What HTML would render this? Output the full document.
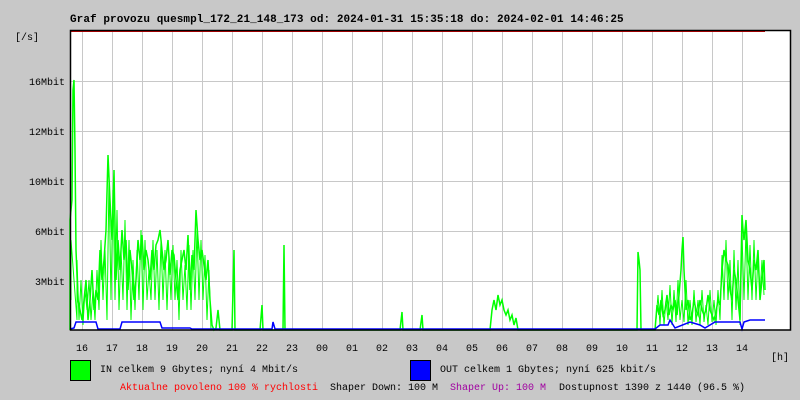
<!DOCTYPE html>
<html><head><meta charset="utf-8"><style>
html,body{margin:0;padding:0;background:#c8c8c8;}
body{width:800px;height:400px;overflow:hidden;position:relative;}
svg{position:absolute;left:0;top:0;}
text{font-family:"Liberation Mono","DejaVu Sans Mono",monospace;font-size:10px;fill:#000;}
.t{font-size:11px;font-weight:bold;letter-spacing:0.07px;}
</style></head><body>
<svg width="800" height="400" viewBox="0 0 800 400">
<rect x="70" y="30" width="720" height="300" fill="#fff"/>
<g stroke="#c8c8c8" stroke-width="1">
<line x1="70" y1="81.5" x2="790" y2="81.5"/><line x1="70" y1="131.5" x2="790" y2="131.5"/><line x1="70" y1="181.5" x2="790" y2="181.5"/><line x1="70" y1="231.5" x2="790" y2="231.5"/><line x1="70" y1="281.5" x2="790" y2="281.5"/>
<line x1="82.5" y1="30" x2="82.5" y2="330"/><line x1="112.5" y1="30" x2="112.5" y2="330"/><line x1="142.5" y1="30" x2="142.5" y2="330"/><line x1="172.5" y1="30" x2="172.5" y2="330"/><line x1="202.5" y1="30" x2="202.5" y2="330"/><line x1="232.5" y1="30" x2="232.5" y2="330"/><line x1="262.5" y1="30" x2="262.5" y2="330"/><line x1="292.5" y1="30" x2="292.5" y2="330"/><line x1="322.5" y1="30" x2="322.5" y2="330"/><line x1="352.5" y1="30" x2="352.5" y2="330"/><line x1="382.5" y1="30" x2="382.5" y2="330"/><line x1="412.5" y1="30" x2="412.5" y2="330"/><line x1="442.5" y1="30" x2="442.5" y2="330"/><line x1="472.5" y1="30" x2="472.5" y2="330"/><line x1="502.5" y1="30" x2="502.5" y2="330"/><line x1="532.5" y1="30" x2="532.5" y2="330"/><line x1="562.5" y1="30" x2="562.5" y2="330"/><line x1="592.5" y1="30" x2="592.5" y2="330"/><line x1="622.5" y1="30" x2="622.5" y2="330"/><line x1="652.5" y1="30" x2="652.5" y2="330"/><line x1="682.5" y1="30" x2="682.5" y2="330"/><line x1="712.5" y1="30" x2="712.5" y2="330"/><line x1="742.5" y1="30" x2="742.5" y2="330"/>
</g>
<polyline fill="none" stroke="#00ff00" stroke-width="1.5" points="70,330 70,220 72,200 73,90 74,80 75,150 76,250 78,300 80,310 82,320 84,300 86,280 88,320 90,300 92,270 94,310 96,290 98,300 100,250 102,280 104,260 106,230 108,155 110,200 112,240 114,170 116,280 118,240 120,270 122,230 124,260 126,240 128,290 130,250 132,270 134,300 136,280 138,240 140,260 142,235 144,270 146,250 148,260 150,280 152,250 154,270 156,245 158,240 160,230 162,250 164,270 166,260 168,240 170,275 172,250 174,255 176,280 178,300 180,270 182,260 184,250 186,270 188,235 190,290 192,255 194,270 196,210 198,240 200,260 202,250 204,265 206,280 208,260 210,300 212,325 214,330 216,328 218,310 220,330 232,330 234,250 235,330 260,330 262,305 263,330 283,330 284,245 285,330 400,330 402,312 403,330 420,330 422,315 423,330 490,330 492,310 494,300 496,310 498,295 500,305 502,300 504,310 506,315 508,310 510,320 512,315 514,325 516,318 518,330 637,330 638,252 639,260 640,270 641,330 655,330 657,305 659,315 661,300 663,315 665,310 667,295 669,315 671,305 673,310 675,300 677,315 679,295 681,270 682,250 683,237 684,270 686,310 688,300 690,320 692,315 694,300 696,310 698,315 700,300 702,310 704,315 706,310 708,295 710,310 712,315 714,320 716,312 718,300 720,305 722,270 724,250 726,260 728,265 730,290 732,300 734,270 736,280 738,300 740,320 742,215 743,230 744,240 746,220 748,260 750,270 752,290 754,260 756,270 758,250 760,300 762,280 764,260 765,290"/>
<polyline fill="none" stroke="#00ff00" stroke-width="1" points="71,300 71,240 77,320 77,260 79,320 81,280 83,325 85,290 87,310 89,280 91,320 93,290 95,320 97,270 99,310 101,240 103,300 105,250 107,320 109,180 111,300 113,190 115,300 117,210 119,310 121,250 123,300 125,220 127,310 129,240 131,320 133,260 135,310 137,250 139,300 141,230 143,310 145,240 147,300 149,270 151,300 153,240 155,300 157,250 159,310 161,240 163,300 165,250 167,310 169,255 171,300 173,245 175,300 177,260 179,320 181,250 183,300 185,265 187,310 189,245 191,310 193,250 195,300 197,230 199,300 201,240 203,300 205,255 207,320 209,270 211,330"/>
<polyline fill="none" stroke="#00ff00" stroke-width="1" points="656,320 658,295 660,325 662,290 664,325 666,300 668,320 670,285 672,325 674,290 676,322 678,280 680,320 682,300 684,322 686,280 688,325 690,300 692,325 694,290 696,322 698,300 700,325 702,290 704,322 706,305 708,325 710,290 712,322 714,300 716,325 718,290 720,320 722,255 724,300 726,240 728,300 730,260 732,320 734,250 736,310 738,260 740,325 742,235 744,300 746,230 748,300 750,245 752,300 754,240 756,300 758,255 760,295 762,260 764,295"/>
<polyline fill="none" stroke="#0000ff" stroke-width="1.5" points="70,329 74,328 76,322 96,322 98,329 120,329 122,322 160,322 162,328 190,328 192,329 272,329 273,322 275,329 655,329 660,325 668,325 670,320 675,328 690,322 700,325 705,328 715,322 740,322 742,329 744,322 750,320 765,320"/>
<line x1="70" y1="31.5" x2="765" y2="31.5" stroke="#d00000" stroke-width="1"/>
<rect x="70.5" y="30.5" width="720" height="299.5" fill="none" stroke="#000" stroke-width="1.5"/>
<text class="t" x="70" y="22">Graf provozu quesmpl_172_21_148_173 od: 2024-01-31 15:35:18 do: 2024-02-01 14:46:25</text>
<text x="15" y="40">[/s]</text>
<g text-anchor="end"><text x="65" y="85">16Mbit</text><text x="65" y="135">12Mbit</text><text x="65" y="185">10Mbit</text><text x="65" y="235">6Mbit</text><text x="65" y="285">3Mbit</text></g>
<g text-anchor="middle">
<text x="82" y="351">16</text><text x="112" y="351">17</text><text x="142" y="351">18</text><text x="172" y="351">19</text><text x="202" y="351">20</text><text x="232" y="351">21</text><text x="262" y="351">22</text><text x="292" y="351">23</text><text x="322" y="351">00</text><text x="352" y="351">01</text><text x="382" y="351">02</text><text x="412" y="351">03</text><text x="442" y="351">04</text><text x="472" y="351">05</text><text x="502" y="351">06</text><text x="532" y="351">07</text><text x="562" y="351">08</text><text x="592" y="351">09</text><text x="622" y="351">10</text><text x="652" y="351">11</text><text x="682" y="351">12</text><text x="712" y="351">13</text><text x="742" y="351">14</text>
</g>
<text x="771" y="360">[h]</text>
<rect x="70.5" y="360.5" width="20" height="20" fill="#00ff00" stroke="#000"/>
<text x="100" y="372">IN celkem 9 Gbytes; nyní 4 Mbit/s</text>
<rect x="410.5" y="360.5" width="20" height="20" fill="#0000ff" stroke="#000"/>
<text x="440" y="372">OUT celkem 1 Gbytes; nyní 625 kbit/s</text>
<text x="120" y="390" style="fill:#ff0000">Aktualne povoleno 100 % rychlosti</text>
<text x="330" y="390">Shaper Down: 100 M</text>
<text x="450" y="390" style="fill:#a000a0">Shaper Up: 100 M</text>
<text x="559" y="390">Dostupnost 1390 z 1440 (96.5 %)</text>
</svg>
</body></html>
